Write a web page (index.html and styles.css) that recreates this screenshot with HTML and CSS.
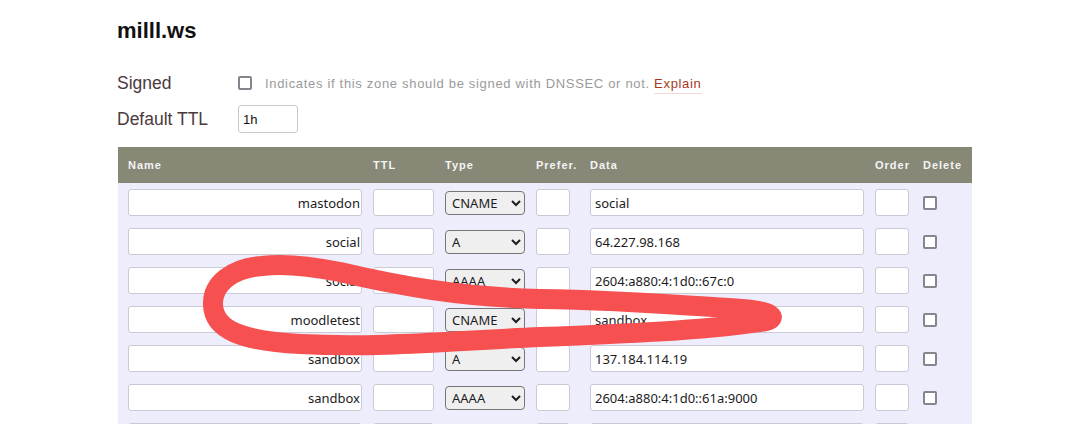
FILE: index.html
```html
<!DOCTYPE html>
<html lang="en">
<head>
  <meta charset="UTF-8">
  <title>milll.ws - Zone</title>
  <link rel="stylesheet" href="styles.css">
</head>
<body>
  <div class="page">
    <h1 class="zone-title">milll.ws</h1>

    <div class="zone-settings">
      <div class="setting">
        <label class="setting-label" for="signed">Signed</label>
        <input type="checkbox" id="signed" class="check">
        <span class="hint">Indicates if this zone should be signed with DNSSEC or not. <a href="#" class="explain">Explain</a></span>
      </div>
      <div class="setting">
        <label class="setting-label" for="ttl">Default TTL</label>
        <input type="text" id="ttl" class="ttl-input" value="1h">
      </div>
    </div>

    <div class="records">
      <div class="rec-head">
        <span>Name</span>
        <span>TTL</span>
        <span>Type</span>
        <span>Prefer.</span>
        <span>Data</span>
        <span>Order</span>
        <span class="del-head">Delete</span>
      </div>
      <div id="rows"></div>
    </div>

    <!-- marker scribble drawn over the table -->
    <svg class="scribble" width="1069" height="424" viewBox="0 0 1069 424">
      <path d="M262 266 C232 268 212 284 213 305 C214 330 242 341 300 344 C380 348 450 341 540 337 C620 334 700 331 766 321 C778 318 772 311 742 309 C680 305 620 300 540 299 C460 297 400 286 340 272 C310 266 284 263 262 266 Z"
            fill="none" stroke="#f65051" stroke-width="20" stroke-linecap="round" stroke-linejoin="round"/>
    </svg>
  </div>

  <script>
    const records = [
      { name: 'mastodon', type: 'CNAME', data: 'social' },
      { name: 'social', type: 'A', data: '64.227.98.168' },
      { name: 'social', type: 'AAAA', data: '2604:a880:4:1d0::67c:0' },
      { name: 'moodletest', type: 'CNAME', data: 'sandbox' },
      { name: 'sandbox', type: 'A', data: '137.184.114.19' },
      { name: 'sandbox', type: 'AAAA', data: '2604:a880:4:1d0::61a:9000' },
      { name: 'www', type: 'CNAME', data: 'social' },
      { name: '', type: 'A', data: '' }
    ];
    const TYPES = ['A', 'AAAA', 'CNAME', 'MX', 'TXT', 'SRV', 'NS'];

    const rows = document.getElementById('rows');
    records.forEach((rec) => {
      const row = document.createElement('div');
      row.className = 'rec-row';
      const options = TYPES.map(t => `<option${t === rec.type ? ' selected' : ''}>${t}</option>`).join('');
      row.innerHTML = `
        <input type="text" class="field name-field" value="${rec.name}">
        <input type="text" class="field">
        <select class="type-select">${options}</select>
        <input type="text" class="field small-field">
        <input type="text" class="field" value="${rec.data}">
        <input type="text" class="field">
        <input type="checkbox" class="check del-check">`;
      rows.appendChild(row);
    });
  </script>
</body>
</html>
```

FILE: styles.css
```css
body {
  margin: 0;
  background-color: white;
  font-family: "Liberation Sans", Arial, sans-serif;
  overflow: hidden;
}

.page {
  position: relative;
  padding: 18px 0 0 117px;
}

.zone-title {
  margin: 0;
  font-size: 22px;
  line-height: 26px;
  font-weight: bold;
  color: #111;
}

.zone-settings {
  margin-top: 26px;
  display: flex;
  flex-direction: column;
  gap: 9px;
}

.setting {
  display: flex;
  align-items: center;
  min-height: 26px;
}

.setting-label {
  width: 121px;
  font-size: 17.5px;
  line-height: 26px;
  color: #4b3a3d;
}

/* flat grey checkbox */
.check {
  appearance: none;
  width: 14px;
  height: 14px;
  margin: 0;
  border: 2px solid #85858f;
  border-radius: 2px;
  background: white;
}

.hint {
  margin-left: 13px;
  font-size: 13px;
  letter-spacing: 0.68px;
  color: #9a9a9a;
}

.explain {
  color: #a5391d;
  text-decoration: none;
  border-bottom: 1px solid #f4dad4;
  padding-bottom: 2px;
}

.ttl-input {
  width: 60px;
  height: 28px;
  box-sizing: border-box;
  padding: 0 4px;
  border: 1px solid #c9c9d2;
  border-radius: 3px;
  font-family: "Liberation Sans", Arial, sans-serif;
  font-size: 13px;
  color: #111;
}

.records {
  margin-top: 14px;
  margin-left: 1px;
  width: 854px;
  background-color: #ededfb;
}

.rec-head,
.rec-row {
  display: grid;
  grid-template-columns: 234px 61px 80px 43px 274px 34px 1fr;
  column-gap: 11px;
  padding: 0 10px;
}

.rec-head {
  height: 36px;
  align-items: center;
  background-color: #888876;
  color: #f4f4f4;
  font-size: 11px;
  font-weight: bold;
  letter-spacing: 1px;
}

.del-head {
  padding-left: 3px;
}

.rec-row {
  padding-top: 6px;
  padding-bottom: 6px;
  align-items: center;
}

.field {
  height: 27px;
  box-sizing: border-box;
  padding: 0 4px;
  border: 1px solid #cacad6;
  border-radius: 3px;
  background: white;
  font-family: "Noto Sans", sans-serif;
  font-size: 13px;
  color: #1c1c24;
  min-width: 0;
}

.name-field {
  text-align: right;
  padding-right: 1px;
}

.small-field {
  width: 34px;
}

.type-select {
  height: 24px;
  font-family: "Noto Sans", sans-serif;
  font-size: 13px;
  color: #1c1c24;
  border-radius: 4px;
  padding: 0 2px;
}

.del-check {
  margin-left: 3px;
}

.scribble {
  position: absolute;
  top: 0;
  left: 0;
  pointer-events: none;
}
```
